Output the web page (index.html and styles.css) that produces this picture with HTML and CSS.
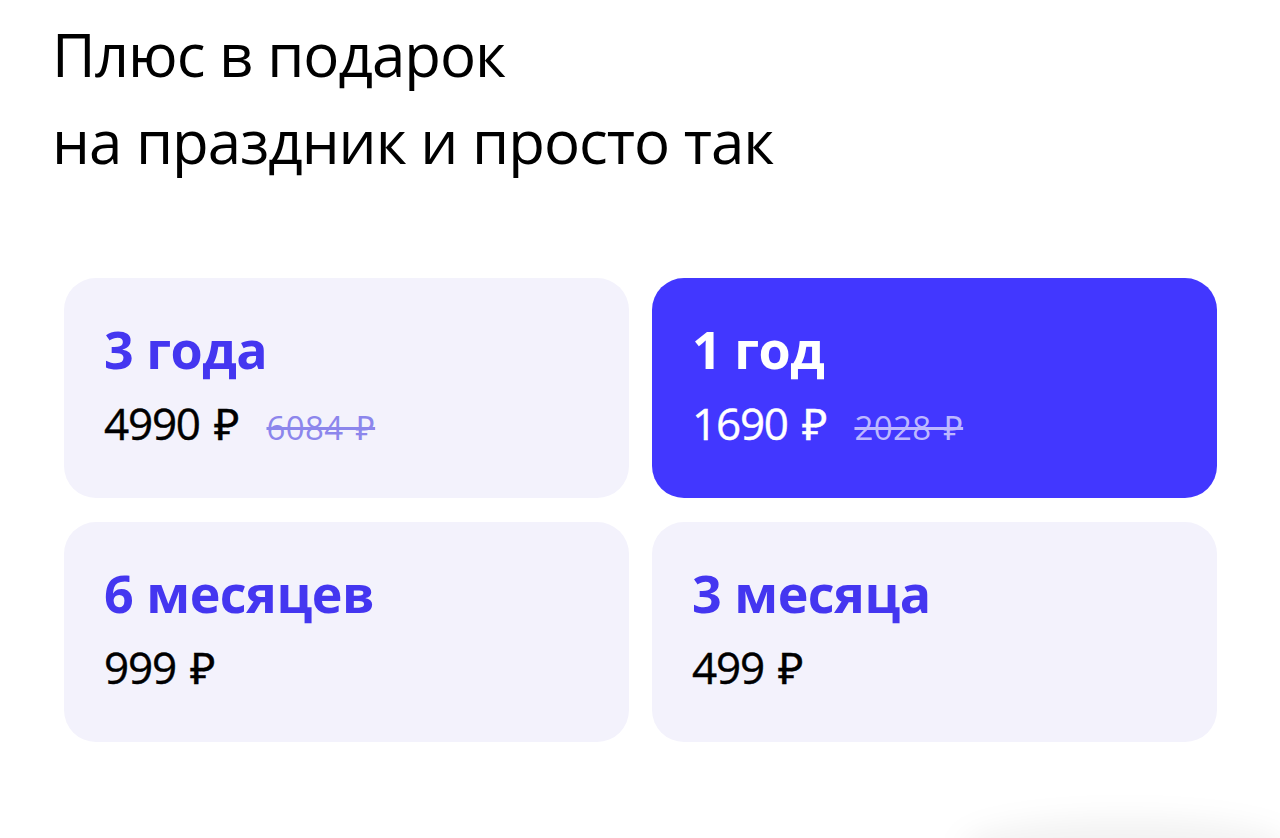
FILE: index.html
```html
<!DOCTYPE html>
<html lang="ru">
<head>
<meta charset="utf-8">
<link rel="stylesheet" href="styles.css">
</head>
<body>
<main class="page">
  <h1 class="title">Плюс в подарок<br>на праздник и просто так</h1>
  <section class="plans">
    <div class="plan">
      <div class="plan-name">3 года</div>
      <div class="plan-price"><span class="now">4990 ₽</span><s class="old">6084 ₽</s></div>
    </div>
    <div class="plan plan-active">
      <div class="plan-name">1 год</div>
      <div class="plan-price"><span class="now">1690 ₽</span><s class="old">2028 ₽</s></div>
    </div>
    <div class="plan">
      <div class="plan-name">6 месяцев</div>
      <div class="plan-price"><span class="now">999 ₽</span></div>
    </div>
    <div class="plan">
      <div class="plan-name">3 месяца</div>
      <div class="plan-price"><span class="now">499 ₽</span></div>
    </div>
  </section>
  <div class="float-shadow"></div>
</main>
</body>
</html>
```

FILE: styles.css
```css
html, body {
  margin: 0;
  padding: 0;
  background: #ffffff;
}
body {
  font-family: "Open Sans", "Noto Sans", sans-serif;
  color: #000;
  overflow: hidden;
}
.page {
  position: relative;
  width: 1280px;
  height: 838px;
  overflow: hidden;
}
.title {
  margin: 11px 0 0 52px;
  font-size: 60px;
  line-height: 87px;
  font-weight: 400;
  letter-spacing: -1px;
}
.plans {
  margin: 93px 0 0 64px;
  width: 1153px;
  display: grid;
  grid-template-columns: 1fr 1fr;
  column-gap: 23px;
  row-gap: 24px;
}
.plan {
  height: 220px;
  box-sizing: border-box;
  background: #f3f2fc;
  border-radius: 32px;
  padding: 45px 40px 0;
}
.plan-name {
  font-size: 52px;
  line-height: 52px;
  font-weight: 700;
  color: #4436f0;
  letter-spacing: -0.5px;
}
.plan-price {
  margin-top: 27px;
  display: flex;
  align-items: baseline;
  gap: 28px;
  line-height: 42px;
}
.now {
  font-size: 44px;
  font-weight: 400;
  letter-spacing: -1.2px;
  word-spacing: 4px;
  -webkit-text-stroke: 0.4px currentColor;
}
.old {
  font-size: 33px;
  color: #8c86ec;
  letter-spacing: 0.4px;
  word-spacing: 3px;
  text-decoration-thickness: 3px;
}
.plan-active {
  background: #4237ff;
}
.plan-active .plan-name,
.plan-active .now {
  color: #ffffff;
}
.plan-active .old {
  color: #bdb8ff;
}
.float-shadow {
  position: absolute;
  left: 960px;
  top: 818px;
  width: 330px;
  height: 60px;
  border-radius: 50%;
  background: rgba(0, 0, 0, 0.05);
  filter: blur(14px);
}
```
